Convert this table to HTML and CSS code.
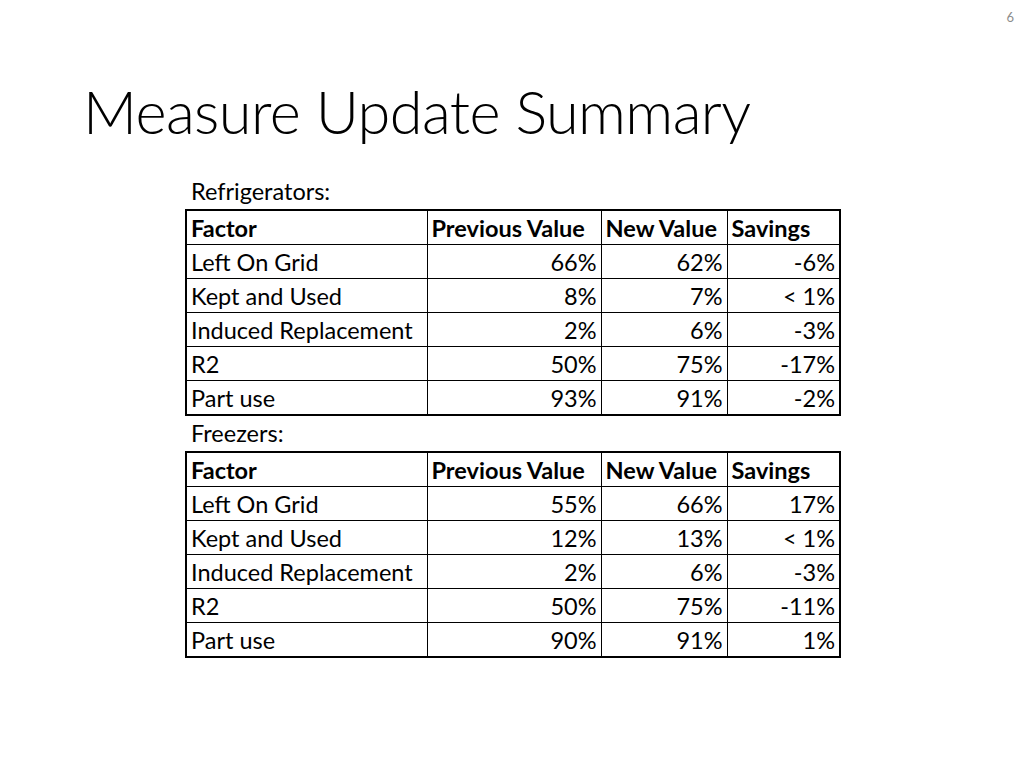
FILE: index.html
```html
<!DOCTYPE html>
<html>
<head>
<meta charset="utf-8">
<link rel="stylesheet" href="styles.css">
</head>
<body>
<div class="slide">
  <div class="pagenum">6</div>
  <h1 class="title">Measure Update Summary</h1>
  <div class="content">
    <div class="caption">Refrigerators:</div>
    <table class="data">
      <colgroup><col class="c1"><col class="c2"><col class="c3"><col class="c4"></colgroup>
      <tr class="head"><th>Factor</th><th>Previous Value</th><th>New Value</th><th>Savings</th></tr>
      <tr><td>Left On Grid</td><td class="n">66%</td><td class="n">62%</td><td class="n">-6%</td></tr>
      <tr><td>Kept and Used</td><td class="n">8%</td><td class="n">7%</td><td class="n">&lt; 1%</td></tr>
      <tr><td>Induced Replacement</td><td class="n">2%</td><td class="n">6%</td><td class="n">-3%</td></tr>
      <tr><td>R2</td><td class="n">50%</td><td class="n">75%</td><td class="n">-17%</td></tr>
      <tr><td>Part use</td><td class="n">93%</td><td class="n">91%</td><td class="n">-2%</td></tr>
    </table>
    <div class="caption">Freezers:</div>
    <table class="data">
      <colgroup><col class="c1"><col class="c2"><col class="c3"><col class="c4"></colgroup>
      <tr class="head"><th>Factor</th><th>Previous Value</th><th>New Value</th><th>Savings</th></tr>
      <tr><td>Left On Grid</td><td class="n">55%</td><td class="n">66%</td><td class="n">17%</td></tr>
      <tr><td>Kept and Used</td><td class="n">12%</td><td class="n">13%</td><td class="n">&lt; 1%</td></tr>
      <tr><td>Induced Replacement</td><td class="n">2%</td><td class="n">6%</td><td class="n">-3%</td></tr>
      <tr><td>R2</td><td class="n">50%</td><td class="n">75%</td><td class="n">-11%</td></tr>
      <tr><td>Part use</td><td class="n">90%</td><td class="n">91%</td><td class="n">1%</td></tr>
    </table>
  </div>
</div>
</body>
</html>
```
FILE: styles.css
```css
html, body {
  margin: 0;
  padding: 0;
  background: #ffffff;
}
.slide {
  position: relative;
  width: 1024px;
  height: 768px;
  font-family: Lato, "Open Sans", sans-serif;
  color: #000;
}
.pagenum {
  position: absolute;
  top: 9px;
  right: 10px;
  font-size: 13px;
  color: #8c8c8c;
}
.title {
  margin: 0;
  padding: 77px 0 0 83px;
  font-weight: 300;
  font-size: 59.5px;
  line-height: 68px;
  letter-spacing: -0.6px;
}
.content {
  margin: 29px 0 0 185px;
}
.caption {
  font-size: 23.5px;
  line-height: 35px;
  padding-left: 6px;
}
.data {
  border-collapse: collapse;
  border: 2px solid #000;
  table-layout: fixed;
  width: 654px;
  font-size: 23.5px;
}
.c1 { width: 241px; }
.c2 { width: 174px; }
.c3 { width: 126px; }
.c4 { width: 113px; }
.data th, .data td {
  border: 1px solid #000;
  height: 33px;
  padding: 0 4px;
  white-space: nowrap;
  text-align: left;
  font-weight: 400;
  line-height: 28px;
}
.data th {
  font-weight: 700;
}
.data td.n {
  text-align: right;
}
```
